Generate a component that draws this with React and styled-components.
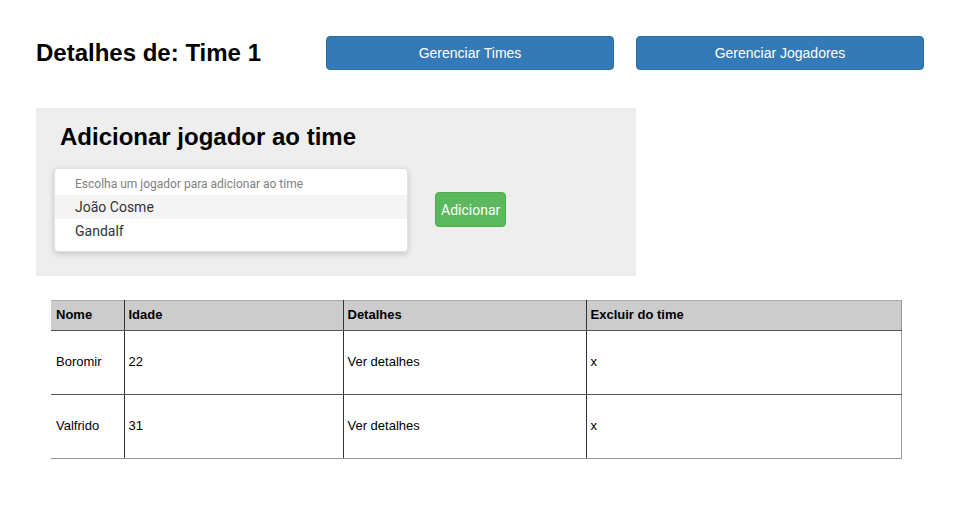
import styled, { createGlobalStyle } from "styled-components";

const GlobalStyle = createGlobalStyle`
  body {
    margin: 0;
    background: #fff;
    font-family: "Liberation Sans", Arial, sans-serif;
    color: #000;
  }
`;

const players = [
  { nome: "Boromir", idade: 22 },
  { nome: "Valfrido", idade: 31 },
];

const options = ["João Cosme", "Gandalf"];

const App = () => {
  return (
    <Page>
      <GlobalStyle />
      <Header>
        <Title>Detalhes de: Time 1</Title>
        <NavButton>Gerenciar Times</NavButton>
        <NavButton>Gerenciar Jogadores</NavButton>
      </Header>

      <Panel>
        <PanelTitle>Adicionar jogador ao time</PanelTitle>
        <PanelRow>
          <Dropdown>
            <Placeholder>Escolha um jogador para adicionar ao time</Placeholder>
            {options.map((o, i) => (
              <Option key={o} active={i === 0}>
                {o}
              </Option>
            ))}
          </Dropdown>
          <AddButton>Adicionar</AddButton>
        </PanelRow>
      </Panel>

      <Table>
        <colgroup>
          <col style={{ width: 73 }} />
          <col style={{ width: 219 }} />
          <col style={{ width: 243 }} />
          <col />
        </colgroup>
        <thead>
          <tr>
            <Th>Nome</Th>
            <Th>Idade</Th>
            <Th>Detalhes</Th>
            <Th>Excluir do time</Th>
          </tr>
        </thead>
        <tbody>
          {players.map((p) => (
            <tr key={p.nome}>
              <Td>{p.nome}</Td>
              <Td>{p.idade}</Td>
              <Td>Ver detalhes</Td>
              <Td>x</Td>
            </tr>
          ))}
        </tbody>
      </Table>
    </Page>
  );
};

export default App;

const Page = styled.div`
  padding: 36px 36px 0 36px;
`;

const Header = styled.div`
  display: flex;
  align-items: center;
  gap: 22px;
`;

const Title = styled.h1`
  margin: 0;
  width: 268px;
  font-size: 24px;
  font-weight: 700;
`;

const NavButton = styled.button`
  width: 288px;
  height: 34px;
  border: 1px solid #2e6da4;
  border-radius: 4px;
  background: #337ab7;
  color: #fff;
  font-family: "Liberation Sans", Arial, sans-serif;
  font-size: 14px;
  padding: 0;
`;

const Panel = styled.div`
  margin-top: 38px;
  width: 600px;
  box-sizing: border-box;
  background: #eeeeee;
  padding: 14px 0 24px 18px;
`;

const PanelTitle = styled.h2`
  margin: 0 0 16px 6px;
  font-size: 24px;
  font-weight: 700;
  line-height: 30px;
`;

const PanelRow = styled.div`
  display: flex;
  align-items: center;
  gap: 27px;
`;

const Dropdown = styled.div`
  width: 354px;
  height: 84px;
  box-sizing: border-box;
  background: #fff;
  border-radius: 4px;
  border: 1px solid #e2e2e2;
  box-shadow: 0 2px 6px rgba(0, 0, 0, 0.18);
  padding: 3px 0 0 0;
  font-family: Roboto, "Liberation Sans", sans-serif;
`;

const Placeholder = styled.div`
  height: 23px;
  line-height: 25px;
  padding-left: 20px;
  font-size: 12px;
  color: #808080;
`;

const Option = styled.div`
  height: 24px;
  line-height: 25px;
  padding-left: 20px;
  font-size: 14px;
  color: #333;
  background: ${(p) => (p.active ? "#f5f5f5" : "#fff")};
`;

const AddButton = styled.button`
  height: 35px;
  padding: 0 5px;
  border: 1px solid #4cae4c;
  border-radius: 4px;
  background: #5cb85c;
  color: #fff;
  font-family: Roboto, "Liberation Sans", sans-serif;
  font-size: 14px;
  margin-top: -1px;
`;

const Table = styled.table`
  margin: 24px 0 0 15px;
  width: 851px;
  table-layout: fixed;
  border-collapse: collapse;
  font-size: 13px;
  border-top: 1px solid #aaa;
  border-right: 1px solid #999;
`;

const Th = styled.th`
  height: 27px;
  padding: 0 4px 2px 4px;
  text-align: left;
  font-weight: 700;
  background: #cccccc;
  border-bottom: 1px solid #555;
  border-left: 1px solid #333;
  &:first-child {
    border-left: none;
    padding-left: 5px;
  }
`;

const Td = styled.td`
  height: 61px;
  padding: 0 4px 2px 4px;
  border-bottom: 1px solid #555;
  border-left: 1px solid #333;
  &:first-child {
    border-left: none;
    padding-left: 5px;
  }
  tr:last-child & {
    border-bottom-color: #999;
  }
`;
